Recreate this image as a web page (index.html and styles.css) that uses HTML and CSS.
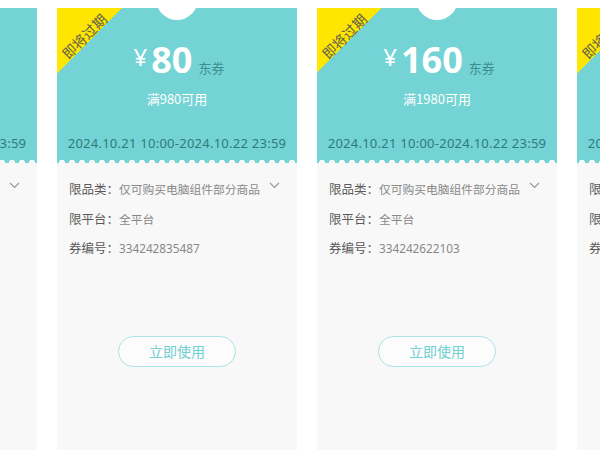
FILE: index.html
```html
<!DOCTYPE html>
<html lang="zh">
<head>
<meta charset="utf-8">
<link rel="stylesheet" href="styles.css">
</head>
<body>
<div class="strip">
  <div class="card">
    <div class="top">
      <div class="notch"></div>
      <div class="price"><span class="yen">¥</span><span class="amount">80</span><span class="unit">东券</span></div>
      <div class="cond">满980可用</div>
      <div class="date">2024.10.21 10:00-2024.10.22 23:59</div>
    </div>
    <div class="body">
      <div class="row"><span class="label">限品类：</span><span class="value">仅可购买电脑组件部分商品</span><svg class="chev" width="11" height="7" viewBox="0 0 11 7"><path d="M1 1l4.5 4.5L10 1" fill="none" stroke="#999" stroke-width="1.2"/></svg></div>
      <div class="row"><span class="label">限平台：</span><span class="value">全平台</span></div>
      <div class="row"><span class="label">券编号：</span><span class="value">334242835487</span></div>
      <div class="btn-wrap"><button class="btn">立即使用</button></div>
    </div>
  </div>
  <div class="card">
    <div class="top">
      <div class="notch"></div>
      <div class="ribbon"><span>即将过期</span></div>
      <div class="price"><span class="yen">¥</span><span class="amount">80</span><span class="unit">东券</span></div>
      <div class="cond">满980可用</div>
      <div class="date">2024.10.21 10:00-2024.10.22 23:59</div>
    </div>
    <div class="body">
      <div class="row"><span class="label">限品类：</span><span class="value">仅可购买电脑组件部分商品</span><svg class="chev" width="11" height="7" viewBox="0 0 11 7"><path d="M1 1l4.5 4.5L10 1" fill="none" stroke="#999" stroke-width="1.2"/></svg></div>
      <div class="row"><span class="label">限平台：</span><span class="value">全平台</span></div>
      <div class="row"><span class="label">券编号：</span><span class="value">334242835487</span></div>
      <div class="btn-wrap"><button class="btn">立即使用</button></div>
    </div>
  </div>
  <div class="card">
    <div class="top">
      <div class="notch"></div>
      <div class="ribbon"><span>即将过期</span></div>
      <div class="price"><span class="yen">¥</span><span class="amount">160</span><span class="unit">东券</span></div>
      <div class="cond">满1980可用</div>
      <div class="date">2024.10.21 10:00-2024.10.22 23:59</div>
    </div>
    <div class="body">
      <div class="row"><span class="label">限品类：</span><span class="value">仅可购买电脑组件部分商品</span><svg class="chev" width="11" height="7" viewBox="0 0 11 7"><path d="M1 1l4.5 4.5L10 1" fill="none" stroke="#999" stroke-width="1.2"/></svg></div>
      <div class="row"><span class="label">限平台：</span><span class="value">全平台</span></div>
      <div class="row"><span class="label">券编号：</span><span class="value">334242622103</span></div>
      <div class="btn-wrap"><button class="btn">立即使用</button></div>
    </div>
  </div>
  <div class="card">
    <div class="top">
      <div class="notch"></div>
      <div class="ribbon"><span>即将过期</span></div>
      <div class="price"><span class="yen">¥</span><span class="amount">80</span><span class="unit">东券</span></div>
      <div class="cond">满980可用</div>
      <div class="date">2024.10.21 10:00-2024.10.22 23:59</div>
    </div>
    <div class="body">
      <div class="row"><span class="label">限品类：</span><span class="value">仅可购买电脑组件部分商品</span></div>
      <div class="row"><span class="label">限平台：</span><span class="value">全平台</span></div>
      <div class="row"><span class="label">券编号：</span><span class="value">334242835487</span></div>
      <div class="btn-wrap"><button class="btn">立即使用</button></div>
    </div>
  </div>
</div>
</body>
</html>
```

FILE: styles.css
```css
html, body {
  margin: 0;
  padding: 0;
  background: #fff;
  overflow: hidden;
  width: 600px;
  height: 450px;
}
body {
  font-family: "Noto Sans", "Noto Sans CJK SC", sans-serif;
}
.strip {
  display: flex;
  gap: 20px;
  margin-left: -203px;
  padding-top: 8px;
}
.card {
  width: 240px;
  flex-shrink: 0;
  height: 460px;
  background: #f8f8f8;
}
.top {
  position: relative;
  height: 155px;
  background: #74d3d4;
  overflow: hidden;
  display: flex;
  flex-direction: column;
  align-items: center;
}
.top::after {
  content: "";
  position: absolute;
  left: 0;
  right: 0;
  bottom: 0;
  height: 4px;
  background: radial-gradient(circle at 5px 4px, #f8f8f8 3px, transparent 3.5px) 0 0 / 10px 4px repeat-x;
}
.notch {
  position: absolute;
  width: 42px;
  height: 42px;
  border-radius: 50%;
  background: #fff;
  left: 99px;
  top: -30px;
}
.ribbon {
  position: absolute;
  left: 0;
  top: 0;
  width: 65px;
  height: 65px;
  background: linear-gradient(135deg, #ffe600 50%, transparent 50%);
}
.ribbon span {
  position: absolute;
  left: -3px;
  top: 20px;
  width: 60px;
  text-align: center;
  transform: rotate(-45deg);
  font-size: 14px;
  color: #626250;
  font-family: "Noto Sans CJK SC", sans-serif;
  line-height: 16px;
}
.price {
  display: flex;
  align-items: baseline;
  margin-top: 30px;
  margin-left: 4px;
  height: 44px;
  color: #fff;
}
.yen {
  font-size: 24px;
  align-self: flex-start;
  margin-top: 2px;
  margin-right: 4px;
  font-family: "Noto Sans", sans-serif;
}
.amount {
  font-family: "Open Sans", sans-serif;
  font-weight: 700;
  font-size: 36px;
  line-height: 44px;
}
.unit {
  font-size: 13px;
  color: #3b8e90;
  margin-left: 6px;
  font-family: "Noto Sans CJK SC", sans-serif;
}
.cond {
  color: #fff;
  font-size: 13px;
  margin-top: 8px;
  font-family: "Noto Sans CJK SC", sans-serif;
  line-height: 18px;
}
.date {
  margin-top: 26px;
  color: #2e7b7d;
  font-size: 13px;
  letter-spacing: 0.25px;
  line-height: 18px;
}
.body {
  padding: 11px 0 0 12px;
}
.row {
  display: flex;
  align-items: center;
  height: 29.5px;
  font-size: 11.75px;
  font-family: "Noto Sans CJK SC", sans-serif;
}
.row .value {
  font-family: "Noto Sans", "Noto Sans CJK SC", sans-serif;
}
.label { color: #5a5a5a; font-size: 12.5px; }
.value { color: #888; }
.chev { margin-left: 9px; margin-top: -6px; }
.btn-wrap {
  display: flex;
  justify-content: center;
  padding-right: 12px;
  margin-top: 73px;
}
.btn {
  width: 118px;
  height: 31px;
  border: 1px solid #a9e3e4;
  border-radius: 16px;
  background: #fcfcfc;
  color: #6fcfd1;
  font-size: 14px;
  font-family: "Noto Sans CJK SC", sans-serif;
  padding: 0;
}
```
